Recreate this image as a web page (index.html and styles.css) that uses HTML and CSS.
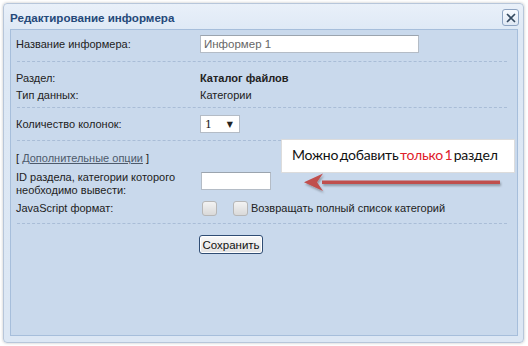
FILE: index.html
```html
<!DOCTYPE html>
<html lang="ru">
<head>
  <meta charset="UTF-8">
  <title>Редактирование информера</title>
  <link rel="stylesheet" href="styles.css">
</head>
<body>
  <div class="page">
    <div class="dialog">
      <div class="titlebar">
        <span class="title">Редактирование информера</span>
        <span class="close">
          <svg width="12" height="12" viewBox="0 0 12 12"><path d="M2 2 L10 10 M10 2 L2 10" stroke="#34495f" stroke-width="1.6" fill="none"/></svg>
        </span>
      </div>
      <div class="panel">
        <div class="row row-name">
          <label class="label">Название информера:</label>
          <input class="text-input name-input" type="text" value="Информер 1">
        </div>
        <hr class="sep sep-1">
        <div class="info">
          <div class="info-line"><span class="label">Раздел:</span><b>Каталог файлов</b></div>
          <div class="info-line"><span class="label">Тип данных:</span><span>Категории</span></div>
        </div>
        <hr class="sep sep-2">
        <div class="row row-cols">
          <label class="label">Количество колонок:</label>
          <div class="select"><span>1</span><span class="caret">&#9660;</span></div>
        </div>
        <hr class="sep sep-3">
        <div class="extra">[ <a href="#">Дополнительные опции</a> ]</div>
        <div class="row row-id">
          <label class="label">ID раздела, категории которого<br>необходимо вывести:</label>
          <input class="text-input id-input" type="text">
        </div>
        <div class="row row-js">
          <label class="label">JavaScript формат:</label>
          <span class="check"></span>
          <span class="check check-2"></span>
          <span class="check-text">Возвращать полный список категорий</span>
        </div>
        <hr class="sep sep-4">
        <div class="actions"><button class="save" type="button">Сохранить</button></div>
      </div>
    </div>

    <div class="callout">Можно добавить <span class="red">только 1</span> раздел</div>
    <svg class="arrow" width="220" height="24" viewBox="0 0 220 24">
      <defs>
        <filter id="sh" x="-10%" y="-50%" width="120%" height="200%">
          <feDropShadow dx="1" dy="2" stdDeviation="1" flood-color="#000" flood-opacity="0.3"/>
        </filter>
      </defs>
      <g filter="url(#sh)">
        <path d="M200 9.5 L22 9.5 L22 13 L200 13 Z" fill="#c0504d"/>
        <path d="M4 11.2 L23 2.5 L17 11.2 L23 20 Z" fill="#c0504d"/>
      </g>
    </svg>
  </div>
</body>
</html>
```

FILE: styles.css
```css
body {
  margin: 0;
  background: #fff;
  font-family: "Liberation Sans", Arial, sans-serif;
  font-size: 11px;
  color: #222;
}
.page {
  position: relative;
  width: 528px;
  height: 346px;
  overflow: hidden;
}
.dialog {
  margin: 3px 0 0 3px;
  width: 521px;
  height: 340px;
  box-sizing: border-box;
  border: 1px solid #b7c6da;
  border-radius: 4px;
  background: linear-gradient(#e9f0f9, #dde8f5 30px, #dce7f4);
  box-shadow: 0 0 3px rgba(0, 0, 0, 0.25);
}
.titlebar {
  height: 25px;
  display: flex;
  align-items: center;
  justify-content: space-between;
  padding: 0 4px 0 6px;
}
.title {
  font-weight: bold;
  font-size: 11.6px;
  color: #25497a;
  margin-top: 1px;
}
.close {
  width: 15px;
  height: 15px;
  display: flex;
  align-items: center;
  justify-content: center;
  border: 1px solid #8ea4c2;
  border-radius: 3px;
  background: linear-gradient(#f7faff, #dfe8f4);
  margin-top: 2px;
}
.panel {
  margin: 0 5px 0 6px;
  height: 307px;
  box-sizing: border-box;
  border: 1px solid #a6bedb;
  background: #c9d9ec;
  padding: 5px 10px 0 5px;
}
.row {
  display: flex;
  align-items: center;
  height: 18px;
}
.label {
  width: 184px;
  flex: none;
}
.text-input {
  box-sizing: border-box;
  height: 18px;
  border: 1px solid #b4bcc6;
  border-top-color: #9ba4ae;
  background: #fff;
  font: 11.5px "Liberation Sans", Arial, sans-serif;
  color: #666;
  padding: 0 3px;
  margin: 0;
}
.name-input {
  width: 219px;
}
.sep {
  border: 0;
  border-top: 1px dashed #a9bdd7;
  height: 0;
  margin: 0 0 0 1px;
}
.sep-1 { margin-top: 8px; }
.sep-2 { margin-top: 3px; }
.sep-3 { margin-top: 7px; }
.sep-4 { margin-top: 6px; }
.info {
  margin-top: 8px;
}
.info-line {
  display: flex;
  line-height: 17px;
}
.row-cols {
  margin-top: 7px;
}
.select {
  box-sizing: border-box;
  width: 40px;
  height: 18px;
  border: 1px solid #b4bcc6;
  background: #fff;
  display: flex;
  align-items: center;
  justify-content: space-between;
  padding: 0 6px 0 4px;
  font-family: "DejaVu Serif", serif;
  font-size: 11px;
}
.caret {
  font-size: 8px;
}
.extra {
  margin-top: 9px;
  line-height: 17px;
}
.extra a {
  color: #4d5a6b;
  text-decoration: underline;
}
.row-id {
  margin-top: 2px;
  height: 28px;
  align-items: flex-start;
}
.row-id .label {
  line-height: 13px;
  padding-top: 2px;
}
.id-input {
  width: 70px;
  margin: 3px 0 0 1px;
}
.row-js {
  margin-top: 2px;
}
.check {
  box-sizing: border-box;
  width: 15px;
  height: 15px;
  border: 1px solid #b7b7b7;
  border-radius: 3px;
  background: linear-gradient(#f3f3f3, #d9d9d9);
  margin-left: 2px;
}
.check-2 {
  margin-left: 16px;
}
.check-text {
  margin-left: 3px;
}
.actions {
  margin-top: 11px;
  padding-left: 183px;
}
.save {
  box-sizing: border-box;
  height: 19px;
  width: 64px;
  padding: 0;
  border: 1px solid #2f4d74;
  border-radius: 3px;
  background: linear-gradient(#f9f9f9, #e2e2e2);
  box-shadow: inset 0 0 0 1px #fff;
  font: 11.5px "Liberation Sans", Arial, sans-serif;
  color: #111;
}
.callout {
  position: absolute;
  left: 281px;
  top: 139px;
  width: 234px;
  height: 34px;
  box-sizing: border-box;
  background: #fff;
  border: 1px solid #dcdcdc;
  padding: 6px 0 0 10px;
  font-family: Lato, "Noto Sans", sans-serif;
  font-size: 14px;
  letter-spacing: -0.2px;
  word-spacing: -2px;
  color: #111;
  white-space: nowrap;
}
.red {
  color: #e0202a;
}
.arrow {
  position: absolute;
  left: 300px;
  top: 171px;
}
```
